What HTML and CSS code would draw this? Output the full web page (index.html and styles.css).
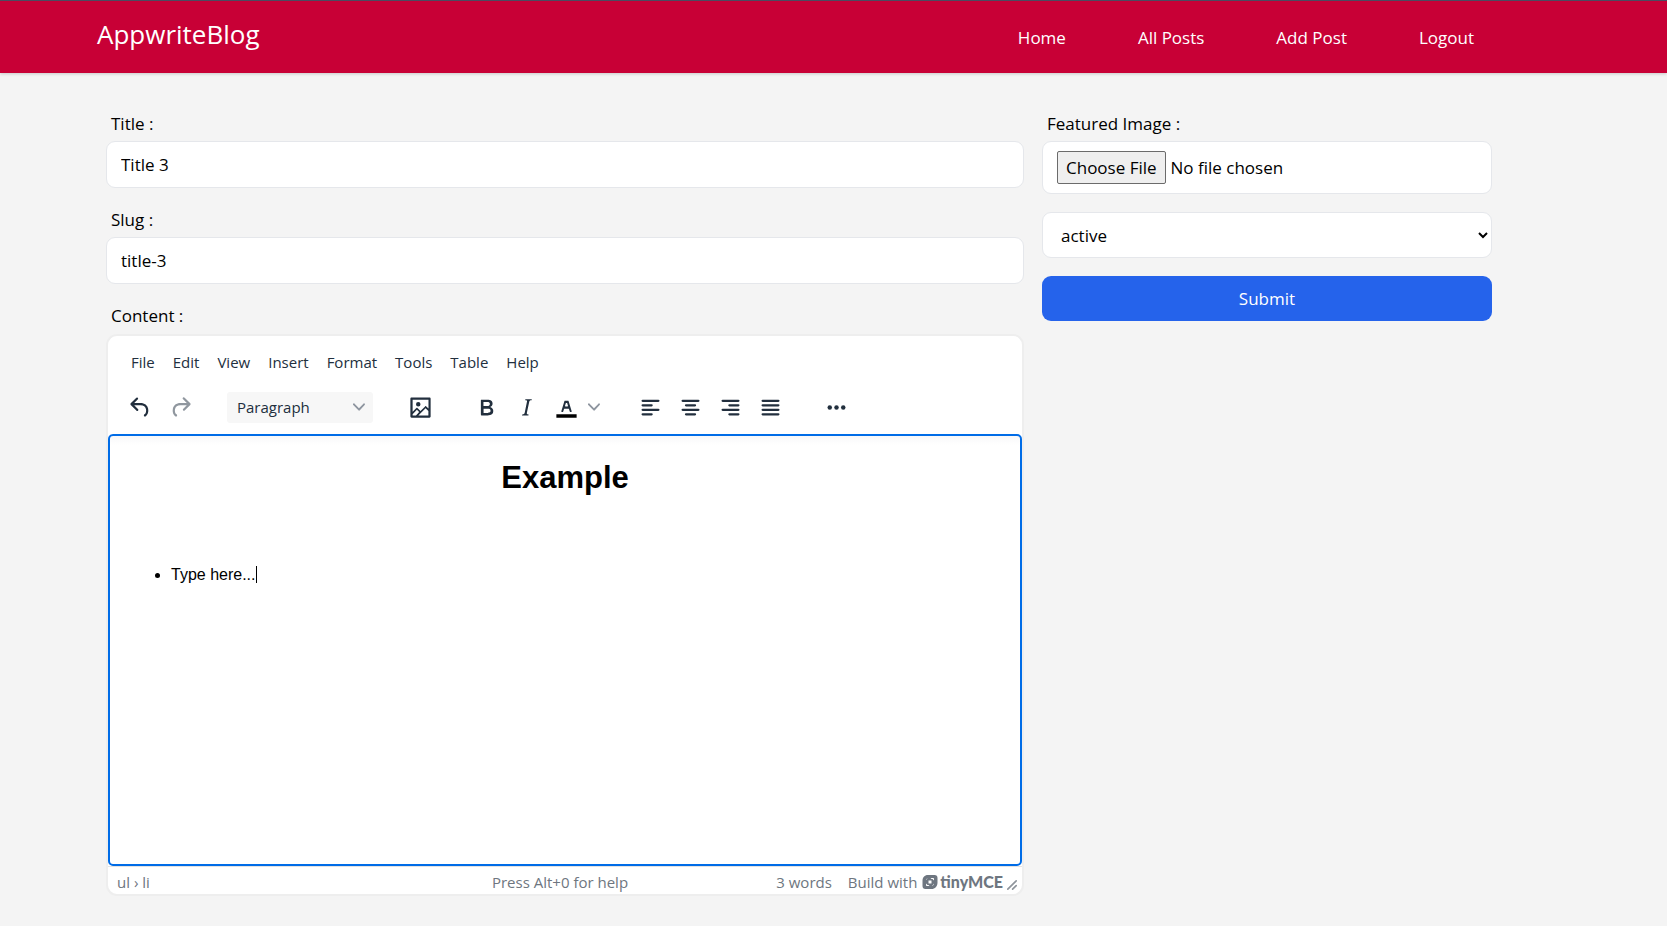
FILE: index.html
```html
<!DOCTYPE html>
<html lang="en">
<head>
<meta charset="utf-8">
<meta name="viewport" content="width=device-width, initial-scale=1">
<title>AppwriteBlog</title>
<link rel="stylesheet" href="styles.css">
</head>
<body>
<header class="site-header">
  <div class="container nav">
    <a class="brand" href="#">AppwriteBlog</a>
    <nav class="nav-links">
      <a href="#">Home</a>
      <a href="#">All Posts</a>
      <a href="#">Add Post</a>
      <button type="button">Logout</button>
    </nav>
  </div>
</header>
<main class="page">
  <form class="container post-form">
    <div class="col-main">
      <div class="field">
        <label for="title">Title :</label>
        <input class="control" id="title" type="text" value="Title 3">
      </div>
      <div class="field">
        <label for="slug">Slug :</label>
        <input class="control" id="slug" type="text" value="title-3">
      </div>
      <div class="field">
        <label id="content-label" for="content">Content :</label>
        <div class="editor">
          <div class="editor-header">
            <div class="menubar">
              <button type="button">File</button>
              <button type="button">Edit</button>
              <button type="button">View</button>
              <button type="button">Insert</button>
              <button type="button">Format</button>
              <button type="button">Tools</button>
              <button type="button">Table</button>
              <button type="button">Help</button>
            </div>
            <div class="toolbar">
              <div class="group">
                <button type="button" class="tool" aria-label="Undo"><svg viewBox="0 0 24 24"><path d="M6.4 8H12c3.7 0 6.2 2 6.8 5.1.6 2.7-.4 5.6-2.3 6.8a1 1 0 0 1-1-1.8c1.1-.6 1.8-2.7 1.4-4.6-.5-2.1-2.1-3.5-4.9-3.5H6.4l3.3 3.3a1 1 0 1 1-1.4 1.4l-5-5a1 1 0 0 1 0-1.4l5-5a1 1 0 0 1 1.4 1.4L6.4 8Z"/></svg></button>
                <button type="button" class="tool muted" aria-label="Redo"><svg viewBox="0 0 24 24"><path d="M17.6 10H12c-2.8 0-4.4 1.4-4.9 3.5-.4 2 .3 4 1.4 4.6a1 1 0 1 1-1 1.8c-2-1.2-2.9-4.1-2.3-6.8.6-3 3-5.1 6.8-5.1h5.6l-3.3-3.3a1 1 0 1 1 1.4-1.4l5 5a1 1 0 0 1 0 1.4l-5 5a1 1 0 0 1-1.4-1.4l3.3-3.3Z"/></svg></button>
              </div>
              <div class="group">
                <button type="button" class="blocks">Paragraph
                  <svg class="chevron" viewBox="0 0 10 10"><path d="M8.7 2.2c.3-.3.8-.3 1 0 .4.4.4.9 0 1.2L5.7 7.8c-.3.3-.9.3-1.2 0L.2 3.4a.8.8 0 0 1 0-1.2c.3-.3.8-.3 1.1 0L5 6l3.7-3.8Z"/></svg>
                </button>
              </div>
              <div class="group">
                <button type="button" class="tool" aria-label="Image"><svg viewBox="0 0 24 24"><path fill-rule="evenodd" d="m5 15.7 3.3-3.2c.3-.3.7-.3 1 0L12 15l4.1-4c.3-.4.8-.4 1 0l2 1.9V5H5v10.7ZM5 18V19h3l2.8-2.9-2-2L5 17.9Zm14-3-2.5-2.4-6.4 6.5H19v-4ZM4 3h16c.6 0 1 .4 1 1v16c0 .6-.4 1-1 1H4a1 1 0 0 1-1-1V4c0-.6.4-1 1-1Zm6 8a2 2 0 1 0 0-4 2 2 0 0 0 0 4Z"/></svg></button>
              </div>
              <div class="group">
                <button type="button" class="tool" aria-label="Bold"><svg viewBox="0 0 24 24"><path fill-rule="evenodd" d="M7.8 19c-.3 0-.5 0-.6-.2l-.2-.5V5.7c0-.2 0-.4.2-.5l.6-.2h5c1.5 0 2.7.3 3.5 1 .7.6 1.1 1.4 1.1 2.5a3 3 0 0 1-.6 1.9c-.4.6-1 1-1.6 1.2.4.1.9.3 1.3.6s.8.7 1 1.2c.4.4.5 1 .5 1.6 0 1.3-.4 2.3-1.3 3-.8.7-2.1 1-3.8 1H7.8Zm5-8.3c.6 0 1.2-.1 1.6-.5.4-.3.6-.7.6-1.3 0-1.1-.8-1.7-2.3-1.7H9.3v3.5h3.4Zm.5 6c.7 0 1.3-.1 1.7-.4.4-.4.6-.9.6-1.5s-.2-1-.7-1.4c-.4-.3-1-.4-2-.4H9.4v3.8h4Z"/></svg></button>
                <button type="button" class="tool" aria-label="Italic"><svg viewBox="0 0 24 24"><path d="m16.7 4.7-.1.9h-.3c-.6 0-1 0-1.4.3-.3.3-.4.6-.5 1.1l-2.1 9.8v.6c0 .5.4.8 1.4.8h.2l-.2.8H8l.2-.8h.2c1.1 0 1.8-.5 2-1.5l2-9.8.1-.5c0-.6-.4-.8-1.4-.8h-.3l.2-.9h5.8Z"/></svg></button>
                <button type="button" class="tool split" aria-label="Text color"><svg viewBox="0 0 24 24"><path class="swatch" d="M3 18h18v3H3z"/><path fill-rule="evenodd" d="M8.7 16h-.8a.5.5 0 0 1-.5-.6l2.7-9c.1-.3.3-.4.5-.4h2.8c.2 0 .4.1.5.4l2.7 9a.5.5 0 0 1-.5.6h-.8a.5.5 0 0 1-.4-.4l-.7-2.2c0-.3-.3-.4-.5-.4h-3.4c-.2 0-.4.1-.5.4l-.7 2.2c0 .3-.2.4-.4.4Zm2.6-7.6-.6 2a.5.5 0 0 0 .5.6h1.6a.5.5 0 0 0 .5-.6l-.6-2c0-.3-.3-.4-.5-.4h-.4c-.2 0-.4.1-.5.4Z"/></svg></button>
                <button type="button" class="tool narrow" aria-label="Text color menu"><svg class="chevron" viewBox="0 0 10 10"><path d="M8.7 2.2c.3-.3.8-.3 1 0 .4.4.4.9 0 1.2L5.7 7.8c-.3.3-.9.3-1.2 0L.2 3.4a.8.8 0 0 1 0-1.2c.3-.3.8-.3 1.1 0L5 6l3.7-3.8Z"/></svg></button>
              </div>
              <div class="group">
                <button type="button" class="tool" aria-label="Align left"><svg viewBox="0 0 24 24"><rect x="4" y="5" width="16" height="2" rx="1"/><rect x="4" y="9" width="10" height="2" rx="1"/><rect x="4" y="13" width="16" height="2" rx="1"/><rect x="4" y="17" width="10" height="2" rx="1"/></svg></button>
                <button type="button" class="tool" aria-label="Align center"><svg viewBox="0 0 24 24"><rect x="4" y="5" width="16" height="2" rx="1"/><rect x="7" y="9" width="10" height="2" rx="1"/><rect x="4" y="13" width="16" height="2" rx="1"/><rect x="7" y="17" width="10" height="2" rx="1"/></svg></button>
                <button type="button" class="tool" aria-label="Align right"><svg viewBox="0 0 24 24"><rect x="4" y="5" width="16" height="2" rx="1"/><rect x="10" y="9" width="10" height="2" rx="1"/><rect x="4" y="13" width="16" height="2" rx="1"/><rect x="10" y="17" width="10" height="2" rx="1"/></svg></button>
                <button type="button" class="tool" aria-label="Justify"><svg viewBox="0 0 24 24"><rect x="4" y="5" width="16" height="2" rx="1"/><rect x="4" y="9" width="16" height="2" rx="1"/><rect x="4" y="13" width="16" height="2" rx="1"/><rect x="4" y="17" width="16" height="2" rx="1"/></svg></button>
              </div>
              <div class="group">
                <button type="button" class="tool" aria-label="More"><svg viewBox="0 0 24 24"><circle cx="6" cy="12" r="2"/><circle cx="12" cy="12" r="2"/><circle cx="18" cy="12" r="2"/></svg></button>
              </div>
            </div>
          </div>
          <div class="edit-area" id="content" contenteditable="true" role="textbox" aria-multiline="true" aria-labelledby="content-label">
            <h1>Example</h1>
            <p><br></p>
            <ul><li>Type here...<span class="caret"></span></li></ul>
          </div>
          <div class="statusbar">
            <div class="status-text">
              <span>ul › li</span>
              <span class="help">Press Alt+0 for help</span>
              <span class="status-right">
                <span>3 words</span>
                <a class="branding" href="#">Build with
                  <span class="logo"><svg viewBox="0 0 16 16"><path fill-rule="evenodd" d="M6 1h6.500C14.500 1 15.500 2 15.500 4v4.500C15.500 12.500 13 15 9.500 15H3.500C1.500 15 .5 14 .5 12V7C.5 3.500 2.500 1 6 1ZM7 4C5 4 4 5 4 7v3c0 1.300.7 2 2 2h3c2 0 3-1 3-3V6c0-1.300-.7-2-2-2Z"/><path fill-rule="evenodd" d="M6 3.500h6.500V9L9.500 12.500H3.500V7ZM6.500 6.500v3h3v-3Z"/><path d="M4 9.500v1.500c0 .8.500 1 1 1h2.500l-1-1H5.500ZM12 6.500V5c0-.8-.5-1-1-1H8.500l1 1h1Z" fill="#fff"/></svg>tinyMCE</span>
                </a>
              </span>
            </div>
            <svg class="resize" viewBox="0 0 10 10"><path d="M8.100 1.100A.5.5 0 1 1 9 2l-7 7A.5.5 0 1 1 1 8l7-7ZM8.100 5.100A.5.5 0 1 1 9 6l-3 3A.5.5 0 1 1 5 8l3-3Z"/></svg>
          </div>
        </div>
      </div>
    </div>
    <div class="col-side">
      <div class="field">
        <label for="image">Featured Image :</label>
        <input class="control file" id="image" type="file">
      </div>
      <div class="field">
        <select class="control" aria-label="Status">
          <option>active</option>
          <option>inactive</option>
        </select>
      </div>
      <button class="submit" type="submit">Submit</button>
    </div>
  </form>
</main>
</body>
</html>
```
FILE: styles.css
```css
*, *::before, *::after { box-sizing: border-box; }

body {
  margin: 0;
  background: #fff;
  color: #000;
  font: 17px/28px "Open Sans", "Noto Sans", sans-serif;
}

button, input, select { font: inherit; color: inherit; }
button { border: 0; padding: 0; background: none; }
a { color: inherit; text-decoration: none; }
svg { display: block; fill: currentColor; }

.container { padding: 0 166px 0 97px; }

.site-header {
  position: relative;
  border-top: 1px solid #4b4a60;
  background: #c80036;
  color: #fff;
  box-shadow: 0 1px 3px rgba(0, 0, 0, .18);
}
.nav { display: flex; align-items: center; justify-content: space-between; height: 72px; }
.brand { font-size: 26px; line-height: 36px; padding-bottom: 6px; }
.nav-links { display: flex; gap: 18px; }
.nav-links a, .nav-links button { padding: 5px 27px 3px; }

.page { padding: 37px 0 30px; background: #f4f4f4; }
.post-form { display: flex; }
.col-main { width: 66.6667%; padding: 0 9px; }
.col-side { width: 33.3333%; padding: 0 9px; }
.field { margin-bottom: 18px; }
.col-main .field:last-child { margin-bottom: 0; }
.field label { display: block; margin-bottom: 3px; padding-left: 5px; }

.control {
  display: block;
  width: 100%;
  height: 47px;
  padding: 8px 14px;
  border: 1px solid #e5e7eb;
  border-radius: 9px;
  background: #fff;
  outline: 0;
}
select.control { height: 46px; }
.control.file { height: 53px; padding: 9px 14px; }
.file::file-selector-button {
  height: 33px;
  margin-right: 5px;
  padding: 1px 8px;
  border: 1px solid #6b6b6b;
  border-radius: 2px;
  background: #efefef;
  color: #000;
  font: inherit;
}
.submit {
  display: block;
  width: 100%;
  height: 45px;
  border-radius: 9px;
  background: #2563eb;
  color: #fff;
}

.editor {
  overflow: hidden;
  margin-top: 4px;
  border: 2px solid #eee;
  border-radius: 11px;
  background: #fff;
  color: #222f3e;
  font-size: 15px;
}
.editor-header { padding-top: 8px; }
.menubar { display: flex; gap: 18px; height: 36px; padding-left: 23px; }
.toolbar { display: flex; align-items: center; gap: 28px; height: 54px; padding-left: 13px; }
.group { display: flex; align-items: center; gap: 2px; }
.tool { display: grid; place-items: center; width: 38px; height: 32px; }
.tool svg { width: 27px; height: 27px; }
.tool.split { margin-right: -3px; }
.tool.narrow { width: 19px; }
.tool .chevron, .chevron { width: 12px; height: 12px; color: #8f96a0; }
.muted { color: #90979f; }
.swatch { fill: #000; }
.blocks {
  display: flex;
  align-items: center;
  justify-content: space-between;
  width: 146px;
  height: 31px;
  padding: 0 8px 0 10px;
  border-radius: 3px;
  background: #f7f7f7;
}

.edit-area {
  height: 432px;
  padding: 0 16px;
  border: 2px solid #006ce7;
  border-radius: 5px;
  outline: 0;
  background: linear-gradient(#f8f8f9, #fff 9px);
  color: #000;
  font: 16px/22px "Liberation Sans", Arial, sans-serif;
}
.edit-area::before { content: ""; display: table; }
.edit-area h1 { margin: 19px 0 22px; font-size: 31px; line-height: 45px; text-align: center; }
.edit-area p { margin: 0 0 20px; }
.edit-area ul { margin: 0; padding-left: 45px; }
.caret { display: inline-block; width: 1px; height: 17px; background: #000; vertical-align: -3px; }

.statusbar {
  display: flex;
  align-items: center;
  height: 28px;
  padding: 0 4px 0 9px;
  border-top: 1px solid #e3e3e3;
  color: #6e7680;
}
.status-text {
  display: grid;
  grid-template-columns: 1fr auto 1fr;
  flex: 1;
  padding-top: 2px;
  line-height: 24px;
}
.status-right { display: flex; justify-content: flex-end; gap: 16px; }
.branding { display: flex; gap: 5px; }
.logo { display: flex; align-items: center; gap: 2px; font: 900 16px/22px Lato, sans-serif; }
.logo svg { width: 16px; height: 16px; }
.resize { align-self: flex-end; width: 12px; height: 12px; margin: 0 0 3px 3px; color: #8f959c; }
```
